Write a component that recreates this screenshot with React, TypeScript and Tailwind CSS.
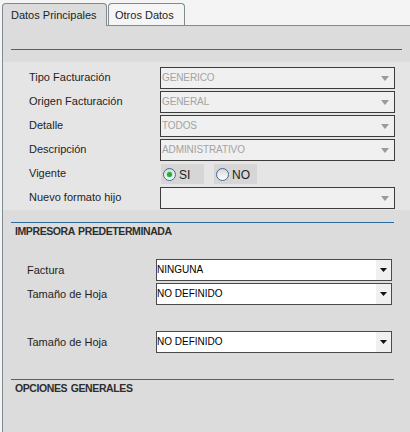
import React from "react";

const font = { fontFamily: '"Liberation Sans", Arial, sans-serif' };

function DisabledSelect({ value }: { value: string }) {
  return (
    <div className="w-[235px] h-[22px] border border-[#3c3c3c] bg-[#f0f0f0] flex items-center pl-[1px] pr-[5px]">
      <span className="flex-1 text-[10px] text-[#a3a3a3] leading-none tracking-[-0.1px]">{value}</span>
      <svg width="8" height="5" viewBox="0 0 8 5">
        <polygon points="0,0 8,0 4,5" fill="#9a9a9a" />
      </svg>
    </div>
  );
}

function WhiteSelect({ value }: { value: string }) {
  return (
    <div className="w-[236px] h-[22px] border border-[#4a4a4a] bg-white flex items-stretch">
      <span className="flex-1 flex items-center text-[10px] text-black leading-none">{value}</span>
      <div className="w-[15px] bg-[#f0f0f0] flex items-center justify-center">
        <svg width="7" height="4" viewBox="0 0 7 4">
          <polygon points="0,0 7,0 3.5,4" fill="#111" />
        </svg>
      </div>
    </div>
  );
}

function Row({ label, children }: { label: string; children: React.ReactNode }) {
  return (
    <div className="flex items-center h-[22px]">
      <span className="w-[131px] text-[11px] text-[#1e1e1e] leading-none -mt-[2px]">{label}</span>
      {children}
    </div>
  );
}

function LowRow({ label, value }: { label: string; value: string }) {
  return (
    <div className="flex items-center h-[22px]">
      <span className="w-[129px] text-[11px] text-[#1e1e1e] leading-none">{label}</span>
      <WhiteSelect value={value} />
    </div>
  );
}

function Radio({ label, checked }: { label: string; checked?: boolean }) {
  return (
    <div className="w-[43px] h-[20px] bg-[#d6d6d6] flex items-center pl-[2px] gap-[3px]">
      <div className="w-[13px] h-[13px] rounded-full border border-[#3d6b9f] bg-gradient-to-b from-[#d8d8d8] to-white flex items-center justify-center">
        {checked && <div className="w-[5px] h-[5px] rounded-full bg-[#1fae3c] shadow-[0_0_2px_#5fd37a]" />}
      </div>
      <span className="text-[12px] text-[#222] leading-none mt-[2px]">{label}</span>
    </div>
  );
}

export default function App() {
  return (
    <div className="w-[410px] h-[432px] bg-[#f4f4f4] overflow-hidden flex flex-col" style={font}>
      {/* tabs */}
      <div className="flex items-start pt-[3px] pl-[2px] h-[25px]">
        <div className="relative z-10 w-[105px] h-[23px] border border-b-0 border-[#7f8b90] rounded-t-[4px] bg-[#dcdcdc] pl-[8px] pt-[5px] text-[11px] text-[#1e1e1e] leading-[12px]">
          Datos Principales
        </div>
        <div className="w-[77px] h-[22px] ml-px border border-b-0 border-[#7f8b90] rounded-t-[4px] bg-[#f5f5f5] pl-[6px] pt-[5px] text-[11px] text-[#1e1e1e] leading-[12px]">
          Otros Datos
        </div>
      </div>
      {/* panel */}
      <div className="flex-1 ml-[2px] border-l border-t border-[#7f8b90] bg-[#dcdcdc] flex flex-col">
        <div className="h-[36px] pt-[23px]">
          <div className="ml-[8px] w-[391px] h-px bg-[#2f6a9c]" />
        </div>
        <div className="bg-[#e5e5e5] pl-[26px] pt-[5px] pb-[1px] flex flex-col gap-[2px]">
          <Row label="Tipo Facturación"><DisabledSelect value="GENERICO" /></Row>
          <Row label="Origen Facturación"><DisabledSelect value="GENERAL" /></Row>
          <Row label="Detalle"><DisabledSelect value="TODOS" /></Row>
          <Row label="Descripción"><DisabledSelect value="ADMINISTRATIVO" /></Row>
          <Row label="Vigente">
            <div className="flex gap-[10px] ml-px">
              <Radio label="SI" checked />
              <Radio label="NO" />
            </div>
          </Row>
          <Row label="Nuevo formato hijo"><DisabledSelect value="" /></Row>
        </div>
        <div className="mt-[12px] ml-[8px] w-[383px] h-px bg-[#2f6a9c]" />
        <div className="h-[16px] leading-[16px] pl-[12px] text-[10.5px] tracking-[-0.4px] [word-spacing:1px] font-bold text-[#2e2e2e]">
          IMPRESORA PREDETERMINADA
        </div>
        <div className="mt-[20px] pl-[24px] flex flex-col">
          <LowRow label="Factura" value="NINGUNA" />
          <div className="mt-[2px]">
            <LowRow label="Tamaño de Hoja" value="NO DEFINIDO" />
          </div>
          <div className="mt-[26px]">
            <LowRow label="Tamaño de Hoja" value="NO DEFINIDO" />
          </div>
        </div>
        <div className="mt-[26px] ml-[8px] w-[383px] h-px bg-[#2f6a9c]" />
        <div className="h-[16px] leading-[16px] pl-[12px] text-[10.5px] tracking-[-0.4px] [word-spacing:1px] font-bold text-[#2e2e2e]">
          OPCIONES GENERALES
        </div>
      </div>
    </div>
  );
}
